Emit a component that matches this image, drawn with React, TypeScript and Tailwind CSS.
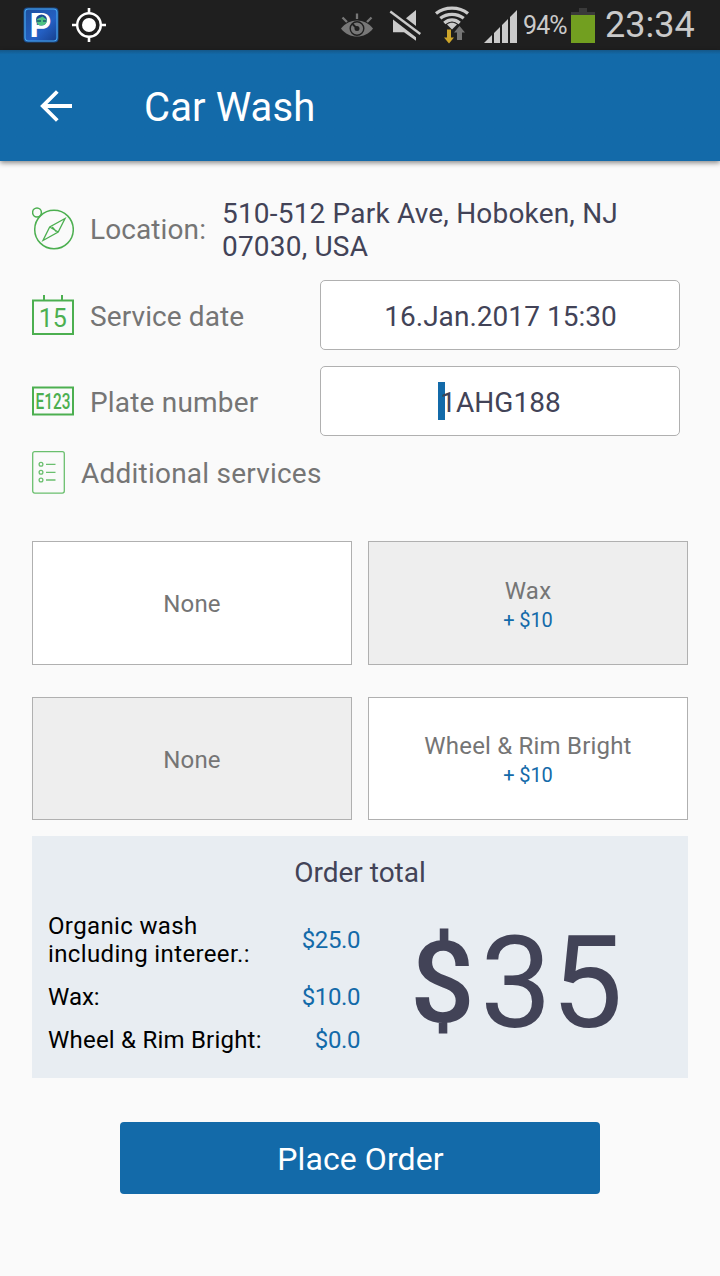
import type { ReactNode } from "react";
import clsx from "clsx";

const services = [
	{ name: "None", price: "", muted: false },
	{ name: "Wax", price: "+ $10", muted: true },
	{ name: "None", price: "", muted: true },
	{ name: "Wheel & Rim Bright", price: "+ $10", muted: false },
];

const ParkingIcon = () => (
	<svg className="overflow-visible" width="36" height="36" viewBox="0 0 36 36">
		<defs>
			<linearGradient id="parking" x1="0" y1="0" x2="1" y2="1">
				<stop offset="0" stopColor="#1d4f9c" />
				<stop offset="0.6" stopColor="#2460c4" />
				<stop offset="1" stopColor="#173f8c" />
			</linearGradient>
		</defs>
		<rect x="0.5" y="0.5" width="35" height="35" rx="4" fill="#1c4c8e" />
		<rect x="2" y="2" width="32" height="32" rx="3.5" fill="url(#parking)" stroke="#46a6ee" strokeWidth="1.2" />
		<text x="6.5" y="30" fontFamily="Roboto, sans-serif" fontWeight="700" fontSize="34" fill="#fff">
			P
		</text>
		<circle cx="18.5" cy="13" r="5.500" fill="#1d4b96" />
		<path d="M13.500 13.500c1-3 3.500-2 6-4l4 3c1 3-1.500 6-5 6s-4.500-2-5-5z" fill="#4fc283" />
		<path d="M14 14h4m2 0h3" stroke="#1d5a6e" strokeWidth="1.300" />
	</svg>
);

const GpsIcon = () => (
	<svg width="34" height="34" viewBox="0 0 34 34" fill="none" stroke="#fff" strokeWidth="2.4">
		<circle cx="17" cy="17" r="11.800" />
		<circle cx="17" cy="17" r="7" fill="#fff" stroke="none" />
		<path d="M17 0v6M17 28v6M0 17h6M28 17h6" strokeWidth="2.600" />
	</svg>
);

const EyeIcon = () => (
	<svg width="32" height="25" viewBox="0 0 32 25" fill="none">
		<path d="M0 15.500C8 4.800 24 4.800 32 15.500C24 26.200 8 26.200 0 15.500z" fill="#777" />
		<circle cx="16" cy="15.500" r="6.800" stroke="#1f1f1f" strokeWidth="1.400" />
		<path d="M16 15.500L11.500 11" stroke="#1f1f1f" strokeWidth="2" />
		<circle cx="16" cy="15.500" r="2.500" fill="#1f1f1f" />
		<path d="M16 .5v5.500M1.500 4.500l4.500 4.500M30.500 4.500l-4.500 4.500" stroke="#777" strokeWidth="2.300" />
	</svg>
);

const MuteIcon = () => (
	<svg width="32" height="32" viewBox="0 0 32 32" fill="#cacaca">
		<path d="M4 9.500L27 27.300V30.800L15 22.200H4z" />
		<path d="M17 8.300L27 0V16z" />
		<path d="M1.300 1.500L31.300 24" stroke="#cacaca" strokeWidth="2.300" />
	</svg>
);

const WifiIcon = () => (
	<svg width="36" height="38" viewBox="0 0 36 38" fill="none" stroke="#cacaca" strokeWidth="3.300">
		<path d="M2 7.500C11 .3 25 .3 34 7.500" />
		<path d="M6.300 12.300C13 7 23 7 29.700 12.300" />
		<path d="M10.300 17C15 13 21 13 25.700 17" />
		<path d="M18 23.500l-5-5c3-2.200 7-2.200 10 0z" fill="#cacaca" stroke="none" />
		<path d="M13 23.500h4v8h3l-5 6-5-6h3z" fill="#cda52a" stroke="none" />
		<path d="M23 34v-7.500h-3l5.500-6.500 5.500 6.500h-3v7.500z" fill="#757575" stroke="none" />
	</svg>
);

const SignalIcon = () => (
	<svg width="33" height="33" viewBox="0 0 33 33" fill="#cacaca">
		<path d="M0 33l8-8v8zM10 23l6-6v16h-6zM18 15l6-6v24h-6zM26 7l7-7v33h-7z" />
	</svg>
);

const CompassIcon = () => (
	<svg width="42" height="43" viewBox="0 0 42 43" fill="none" stroke="#4caf50" strokeWidth="1.500">
		<circle cx="22" cy="22.500" r="19.300" />
		<circle cx="5" cy="5.500" r="4.400" />
		<path d="M33 11.500L17.700 20 11 33.500 26.200 25zM17.700 20l8.500 5M20.200 20l4 4.500" strokeWidth="1.300" />
	</svg>
);

const CalendarIcon = () => (
	<svg width="42" height="40" viewBox="0 0 42 40" fill="none" stroke="#4caf50" strokeWidth="2">
		<path d="M1 5.500h40v33.500H1zM12 0v5.500M30 0v5.500" />
		<text x="20.800" y="31.500" textAnchor="middle" fontFamily="Roboto, sans-serif" fontSize="25" fill="#4caf50" stroke="none">
			15
		</text>
	</svg>
);

const PlateIcon = () => (
	<svg width="42" height="30" viewBox="0 0 42 30" fill="none" stroke="#4caf50" strokeWidth="2">
		<rect x="1" y="1.500" width="40" height="27" />
		<g transform="translate(3.5 22.800) scale(.7 1)">
			<text x="0" y="0" fontFamily="Roboto, sans-serif" fontWeight="500" fontSize="22" fill="#4caf50" stroke="none" textLength="50">
				E123
			</text>
		</g>
	</svg>
);

const ListIcon = () => (
	<svg width="33" height="43" viewBox="0 0 33 43" fill="none" stroke="#6abf6e" strokeWidth="1.300">
		<rect x=".7" y=".7" width="31.600" height="41.400" rx="2" />
		<circle cx="9" cy="13.300" r="1.900" />
		<circle cx="9" cy="21.300" r="1.900" />
		<circle cx="9" cy="29" r="1.900" />
		<path d="M14 13.300h9.500M14 21.300h9.500M14 29h9.500" />
	</svg>
);

const Field = ({ children }: { children: ReactNode }) => (
	<div className="flex h-[70px] w-[360px] items-center justify-center rounded-[5px] border border-[#b0b0b0] bg-white pt-[3px] pl-px text-[28px] leading-8 tracking-[0.04px] text-[#424357]">
		{children}
	</div>
);

const StatusBar = () => (
	<div className="flex h-[50px] items-start bg-[#1f1f1f] pl-[23px] text-[#cacaca]">
		<div className="flex items-center gap-[13px] pt-[7px]">
			<ParkingIcon />
			<GpsIcon />
		</div>
		<div className="ml-auto flex items-start pr-[26px]">
			<div className="mt-[13px]">
				<EyeIcon />
			</div>
			<div className="mt-[10px] ml-[16px]">
				<MuteIcon />
			</div>
			<div className="mt-[6px] ml-[13px]">
				<WifiIcon />
			</div>
			<div className="mt-[10px] ml-[14px]">
				<SignalIcon />
			</div>
			<span className="mt-[11px] ml-[6px] w-[48px] text-[25px] leading-[30px] tracking-[-0.9px] whitespace-nowrap">94%</span>
			<div className="mt-2 flex w-6 flex-col items-center">
				<div className="h-1 w-2 bg-[#3a3a3a]" />
				<div className="h-[3px] w-6 bg-[#3a3a3a]" />
				<div className="h-7 w-6 bg-[#729f20]" />
			</div>
			<span className="mt-[4px] ml-[10px] w-[89px] text-[36px] leading-[42px] whitespace-nowrap">23:34</span>
		</div>
	</div>
);

export default function App() {
	return (
		<div className="flex h-[1276px] w-[720px] flex-col overflow-hidden bg-[#fafafa] font-['Roboto',sans-serif] text-[28px] leading-[33px] text-[#757575]">
			<StatusBar />
			<header className="flex h-[111px] items-center bg-gradient-to-b from-[#14588a] via-[#136aa9] via-[4%] to-[#136aa9] pl-10 text-white shadow-[0_2px_5px_rgba(0,0,0,0.45)]">
				<svg width="32" height="32" viewBox="0 0 32 32" fill="none" stroke="#fff" strokeWidth="3.800">
					<path d="M32 16H3M17.300 1.500L2.800 16l14.500 14.500" />
				</svg>
				<h1 className="mt-[3px] ml-[72px] text-[40px] leading-[47px] tracking-[0.1px]">Car Wash</h1>
			</header>

			<main className="flex flex-col px-8">
				<div className="mt-9 flex h-[66px] items-center">
					<div className="pb-[3px]">
						<CompassIcon />
					</div>
					<span className="ml-4 w-[132px] pb-px tracking-[0.1px]">Location:</span>
					<p className="w-[440px] tracking-[0.19px] text-[#424357]">510-512 Park Ave, Hoboken, NJ 07030, USA</p>
				</div>
				<div className="mt-[17px] flex items-center pr-2">
					<CalendarIcon />
					<span className="mt-[3px] ml-4 flex-1 tracking-[0.1px]">Service date</span>
					<Field>16.Jan.2017 15:30</Field>
				</div>
				<div className="mt-4 flex items-center pr-2">
					<PlateIcon />
					<span className="mt-[3px] ml-4 flex-1 tracking-[0.18px]">Plate number</span>
					<Field>
						<span className="relative">
							<i className="absolute -top-[5px] left-[-2px] h-[38px] w-[7px] bg-[#136aa9]" />
							<span className="relative">1AHG188</span>
						</span>
					</Field>
				</div>
				<div className="mt-[15px] flex h-[43px] items-center">
					<ListIcon />
					<span className="mt-[2px] ml-4 tracking-[0.22px]">Additional services</span>
				</div>

				<div className="mt-[47px] grid grid-cols-2 gap-x-4 gap-y-8">
					{services.map((item, i) => (
						<div
							key={i}
							className={clsx(
								"flex h-[123.5px] flex-col items-center justify-center border border-[#b0b0b0] pt-[2.5px]",
								item.muted ? "bg-[#eee]" : "bg-white",
							)}
						>
							<span className="text-2xl leading-[28px] tracking-[0.2px]">{item.name}</span>
							{item.price && (
								<span className="mt-[3px] text-xl leading-6 tracking-[-0.1px] text-[#136aa9]">{item.price}</span>
							)}
						</div>
					))}
				</div>

				<section className="mt-4 flex h-[242px] flex-col bg-[#e8edf2] px-4 pt-5 text-black">
					<h2 className="text-center text-[#424357]">Order total</h2>
					<div className="mt-[23px] flex">
						<div className="flex w-[312px] flex-col gap-[15px] text-2xl leading-[28px]">
							<div className="flex items-center justify-between">
								<span className="w-[230px] tracking-[0.36px]">Organic wash including intereer.:</span>
								<span className="tracking-[-0.4px] text-[#136aa9]">$25.0</span>
							</div>
							<div className="flex justify-between">
								<span>Wax:</span>
								<span className="tracking-[-0.4px] text-[#136aa9]">$10.0</span>
							</div>
							<div className="flex justify-between">
								<span className="tracking-[0.22px]">Wheel &amp; Rim Bright:</span>
								<span className="tracking-[-0.4px] text-[#136aa9]">$0.0</span>
							</div>
						</div>
						<div className="flex h-[142px] flex-1 items-center pl-[50px] text-[128px] leading-[142px] tracking-[-1px] text-[#424357]">
							<span className="mr-[5px] w-[65px] text-center text-[114px] font-medium tracking-normal">$</span>
							<span>35</span>
						</div>
					</div>
				</section>

				<button className="mt-11 h-[72px] w-[480px] self-center rounded bg-[#136aa9] pt-[2px] pl-px text-[32px] tracking-[0.1px] text-white">
					Place Order
				</button>
			</main>
		</div>
	);
}
